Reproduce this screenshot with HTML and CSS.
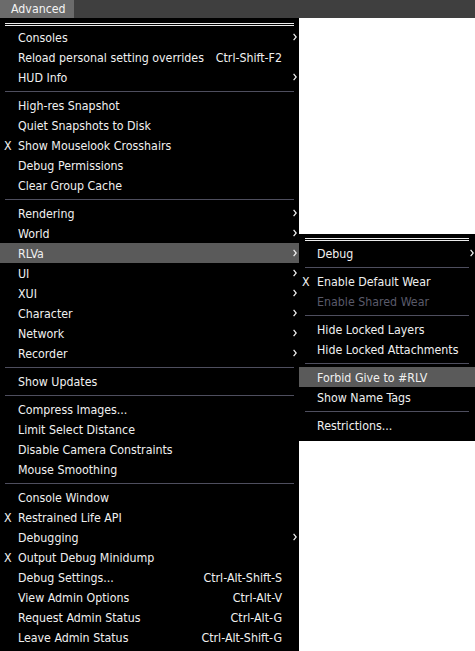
FILE: index.html
```html
<!DOCTYPE html>
<html>
<head>
<meta charset="utf-8">
<link rel="stylesheet" href="styles.css">
</head>
<body>
<div class="menubar"><div class="tab">Advanced</div></div>
<div class="stage">
  <div class="menu main">
    <div class="head"><div class="dbl"></div></div>
    <div class="row"><span class="chk"></span><span class="lbl">Consoles</span><span class="arr"><svg width="4" height="8" viewBox="0 0 4 8"><polyline points="0.6,0.8 3.2,4 0.6,7.2" fill="none" stroke="#f0f0f0" stroke-width="1.2"/></svg></span></div>
    <div class="row"><span class="chk"></span><span class="lbl">Reload personal setting overrides</span><span class="key">Ctrl-Shift-F2</span><span class="arr"></span></div>
    <div class="row"><span class="chk"></span><span class="lbl">HUD Info</span><span class="arr"><svg width="4" height="8" viewBox="0 0 4 8"><polyline points="0.6,0.8 3.2,4 0.6,7.2" fill="none" stroke="#f0f0f0" stroke-width="1.2"/></svg></span></div>
    <div class="sep"></div>
    <div class="row"><span class="chk"></span><span class="lbl">High-res Snapshot</span><span class="arr"></span></div>
    <div class="row"><span class="chk"></span><span class="lbl">Quiet Snapshots to Disk</span><span class="arr"></span></div>
    <div class="row"><span class="chk">X</span><span class="lbl">Show Mouselook Crosshairs</span><span class="arr"></span></div>
    <div class="row"><span class="chk"></span><span class="lbl">Debug Permissions</span><span class="arr"></span></div>
    <div class="row"><span class="chk"></span><span class="lbl">Clear Group Cache</span><span class="arr"></span></div>
    <div class="sep"></div>
    <div class="row"><span class="chk"></span><span class="lbl">Rendering</span><span class="arr"><svg width="4" height="8" viewBox="0 0 4 8"><polyline points="0.6,0.8 3.2,4 0.6,7.2" fill="none" stroke="#f0f0f0" stroke-width="1.2"/></svg></span></div>
    <div class="row"><span class="chk"></span><span class="lbl">World</span><span class="arr"><svg width="4" height="8" viewBox="0 0 4 8"><polyline points="0.6,0.8 3.2,4 0.6,7.2" fill="none" stroke="#f0f0f0" stroke-width="1.2"/></svg></span></div>
    <div class="row hl"><span class="chk"></span><span class="lbl">RLVa</span><span class="arr"><svg width="4" height="8" viewBox="0 0 4 8"><polyline points="0.6,0.8 3.2,4 0.6,7.2" fill="none" stroke="#f0f0f0" stroke-width="1.2"/></svg></span></div>
    <div class="row"><span class="chk"></span><span class="lbl">UI</span><span class="arr"><svg width="4" height="8" viewBox="0 0 4 8"><polyline points="0.6,0.8 3.2,4 0.6,7.2" fill="none" stroke="#f0f0f0" stroke-width="1.2"/></svg></span></div>
    <div class="row"><span class="chk"></span><span class="lbl">XUI</span><span class="arr"><svg width="4" height="8" viewBox="0 0 4 8"><polyline points="0.6,0.8 3.2,4 0.6,7.2" fill="none" stroke="#f0f0f0" stroke-width="1.2"/></svg></span></div>
    <div class="row"><span class="chk"></span><span class="lbl">Character</span><span class="arr"><svg width="4" height="8" viewBox="0 0 4 8"><polyline points="0.6,0.8 3.2,4 0.6,7.2" fill="none" stroke="#f0f0f0" stroke-width="1.2"/></svg></span></div>
    <div class="row"><span class="chk"></span><span class="lbl">Network</span><span class="arr"><svg width="4" height="8" viewBox="0 0 4 8"><polyline points="0.6,0.8 3.2,4 0.6,7.2" fill="none" stroke="#f0f0f0" stroke-width="1.2"/></svg></span></div>
    <div class="row"><span class="chk"></span><span class="lbl">Recorder</span><span class="arr"><svg width="4" height="8" viewBox="0 0 4 8"><polyline points="0.6,0.8 3.2,4 0.6,7.2" fill="none" stroke="#f0f0f0" stroke-width="1.2"/></svg></span></div>
    <div class="sep"></div>
    <div class="row"><span class="chk"></span><span class="lbl">Show Updates</span><span class="arr"></span></div>
    <div class="sep"></div>
    <div class="row"><span class="chk"></span><span class="lbl">Compress Images...</span><span class="arr"></span></div>
    <div class="row"><span class="chk"></span><span class="lbl">Limit Select Distance</span><span class="arr"></span></div>
    <div class="row"><span class="chk"></span><span class="lbl">Disable Camera Constraints</span><span class="arr"></span></div>
    <div class="row"><span class="chk"></span><span class="lbl">Mouse Smoothing</span><span class="arr"></span></div>
    <div class="sep"></div>
    <div class="row"><span class="chk"></span><span class="lbl">Console Window</span><span class="arr"></span></div>
    <div class="row"><span class="chk">X</span><span class="lbl">Restrained Life API</span><span class="arr"></span></div>
    <div class="row"><span class="chk"></span><span class="lbl">Debugging</span><span class="arr"><svg width="4" height="8" viewBox="0 0 4 8"><polyline points="0.6,0.8 3.2,4 0.6,7.2" fill="none" stroke="#f0f0f0" stroke-width="1.2"/></svg></span></div>
    <div class="row"><span class="chk">X</span><span class="lbl">Output Debug Minidump</span><span class="arr"></span></div>
    <div class="row"><span class="chk"></span><span class="lbl">Debug Settings...</span><span class="key">Ctrl-Alt-Shift-S</span><span class="arr"></span></div>
    <div class="row"><span class="chk"></span><span class="lbl">View Admin Options</span><span class="key">Ctrl-Alt-V</span><span class="arr"></span></div>
    <div class="row"><span class="chk"></span><span class="lbl">Request Admin Status</span><span class="key">Ctrl-Alt-G</span><span class="arr"></span></div>
    <div class="row"><span class="chk"></span><span class="lbl">Leave Admin Status</span><span class="key">Ctrl-Alt-Shift-G</span><span class="arr"></span></div>
  </div>

  <div class="menu sub">
    <div class="head"><div class="dbl"></div></div>
    <div class="row"><span class="chk"></span><span class="lbl">Debug</span><span class="arr"><svg width="4" height="8" viewBox="0 0 4 8"><polyline points="0.6,0.8 3.2,4 0.6,7.2" fill="none" stroke="#f0f0f0" stroke-width="1.2"/></svg></span></div>
    <div class="sep"></div>
    <div class="row"><span class="chk">X</span><span class="lbl">Enable Default Wear</span><span class="arr"></span></div>
    <div class="row dis"><span class="chk"></span><span class="lbl">Enable Shared Wear</span><span class="arr"></span></div>
    <div class="sep"></div>
    <div class="row"><span class="chk"></span><span class="lbl">Hide Locked Layers</span><span class="arr"></span></div>
    <div class="row"><span class="chk"></span><span class="lbl">Hide Locked Attachments</span><span class="arr"></span></div>
    <div class="sep"></div>
    <div class="row hl"><span class="chk"></span><span class="lbl">Forbid Give to #RLV</span><span class="arr"></span></div>
    <div class="row"><span class="chk"></span><span class="lbl">Show Name Tags</span><span class="arr"></span></div>
    <div class="sep"></div>
    <div class="row"><span class="chk"></span><span class="lbl">Restrictions...</span><span class="arr"></span></div>
  </div>
</div>
</body>
</html>
```

FILE: styles.css
```css
html, body {
  margin: 0;
  padding: 0;
  background: #ffffff;
}
body {
  width: 475px;
  height: 651px;
  overflow: hidden;
  font-family: "DejaVu Sans Condensed", "DejaVu Sans", sans-serif;
  font-size: 12.3px;
  color: #f0f0f0;
}
.menubar {
  height: 18px;
  background: #3f3f3f;
  display: flex;
}
.tab {
  width: 74px;
  box-sizing: border-box;
  padding-left: 11px;
  padding-top: 1px;
  background: #6b6b6b;
  line-height: 16px;
  color: #f4f4f4;
}
.stage {
  position: relative;
  height: 633px;
}
.menu {
  background: #000000;
  display: flex;
  flex-direction: column;
}
.main {
  width: 299px;
  height: 633px;
}
.sub {
  position: absolute;
  left: 299px;
  top: 216px;
  width: 176px;
  padding-bottom: 6px;
}
.head {
  height: 9px;
  box-sizing: border-box;
  padding: 5px 5px 0 5px;
}
.sub .head {
  padding: 4px 6px 0 6px;
}
.dbl {
  height: 1px;
  border-top: 1px solid #ececec;
  border-bottom: 1px solid #ececec;
}
.sep {
  height: 8px;
  box-sizing: border-box;
  padding: 4px 5px 0 5px;
}
.sep::before {
  content: "";
  display: block;
  height: 1px;
  background: #4e4e5e;
}
.sub .sep {
  padding: 4px 6px 0 6px;
}
.row {
  height: 20px;
  box-sizing: border-box;
  padding-top: 2px;
  display: flex;
  align-items: center;
  white-space: nowrap;
}
.row.hl {
  background: #5a5a5a;
}
.row.dis {
  color: #5a5a6a;
}
.chk {
  width: 18px;
  flex: none;
  box-sizing: border-box;
  padding-left: 4px;
}
.sub .chk {
  padding-left: 3px;
}
.lbl {
  flex: 1;
}
.key {
  flex: none;
}
.arr {
  width: 17px;
  flex: none;
  display: flex;
  align-items: center;
  justify-content: flex-end;
  padding-right: 2px;
  padding-bottom: 2px;
  box-sizing: border-box;
  height: 18px;
}
.sub .arr {
  padding-right: 1px;
}
.arr svg {
  display: block;
}
```
